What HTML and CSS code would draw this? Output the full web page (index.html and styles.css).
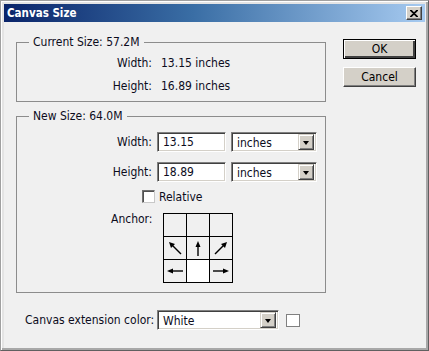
FILE: index.html
```html
<!DOCTYPE html>
<html lang="en">
<head>
    <meta charset="UTF-8">
    <meta name="viewport" content="width=device-width, initial-scale=1.0">
    <title>Canvas Size</title>
    <link rel="stylesheet" href="styles.css">
</head>
<body>
    <div class="window">
        <div class="titlebar">
            <span class="title">Canvas Size</span>
            <button class="close-button">
                <svg width="8" height="7" viewBox="0 0 8 7"><path d="M0 0 L7 7 M1 0 L8 7 M7 0 L0 7 M8 0 L1 7" stroke="#000" stroke-width="1.1"/></svg>
            </button>
        </div>

        <div class="dialog">
            <div class="main-column">
                <fieldset class="group current-size">
                    <legend>Current Size: 57.2M</legend>
                    <div class="info-row">
                        <span class="label">Width:</span>
                        <span class="value">13.15 inches</span>
                    </div>
                    <div class="info-row">
                        <span class="label">Height:</span>
                        <span class="value">16.89 inches</span>
                    </div>
                </fieldset>

                <fieldset class="group new-size">
                    <legend>New Size: 64.0M</legend>
                    <div class="field-row">
                        <span class="label">Width:</span>
                        <div class="text-input">13.15</div>
                        <div class="select unit-select">
                            <span class="select-text">inches</span>
                            <span class="select-arrow"></span>
                        </div>
                    </div>
                    <div class="field-row">
                        <span class="label">Height:</span>
                        <div class="text-input">18.89</div>
                        <div class="select unit-select">
                            <span class="select-text">inches</span>
                            <span class="select-arrow"></span>
                        </div>
                    </div>
                    <div class="check-row">
                        <span class="checkbox"></span>
                        <span>Relative</span>
                    </div>
                    <div class="anchor-row">
                        <span class="anchor-label">Anchor:</span>
                        <div class="anchor-grid">
                            <div class="cell"></div>
                            <div class="cell"></div>
                            <div class="cell"></div>
                            <div class="cell">
                                <svg width="22" height="22" viewBox="0 0 22 22"><path d="M17 17 L8 8" stroke="#000" stroke-width="1.4"/><path d="M5 5 L11 7 L7 11 Z" fill="#000"/></svg>
                            </div>
                            <div class="cell">
                                <svg width="22" height="22" viewBox="0 0 22 22"><path d="M11 19 L11 8" stroke="#000" stroke-width="1.4"/><path d="M11 4 L13.5 10 L8.5 10 Z" fill="#000"/></svg>
                            </div>
                            <div class="cell">
                                <svg width="22" height="22" viewBox="0 0 22 22"><path d="M5 17 L14 8" stroke="#000" stroke-width="1.4"/><path d="M17 5 L15 11 L11 7 Z" fill="#000"/></svg>
                            </div>
                            <div class="cell">
                                <svg width="22" height="22" viewBox="0 0 22 22"><path d="M19 11 L8 11" stroke="#000" stroke-width="1.4"/><path d="M3 11 L9 8.5 L9 13.5 Z" fill="#000"/></svg>
                            </div>
                            <div class="cell center"></div>
                            <div class="cell">
                                <svg width="22" height="22" viewBox="0 0 22 22"><path d="M3 11 L14 11" stroke="#000" stroke-width="1.4"/><path d="M19 11 L13 8.5 L13 13.5 Z" fill="#000"/></svg>
                            </div>
                        </div>
                    </div>
                </fieldset>

                <div class="extension-row">
                    <span class="extension-label">Canvas extension color:</span>
                    <div class="select color-select">
                        <span class="select-text">White</span>
                        <span class="select-arrow"></span>
                    </div>
                    <span class="swatch"></span>
                </div>
            </div>

            <div class="button-column">
                <button class="dialog-button default-button">OK</button>
                <button class="dialog-button">Cancel</button>
            </div>
        </div>
    </div>
</body>
</html>
```

FILE: styles.css
```css
* {
    box-sizing: border-box;
}

body {
    margin: 0;
    width: 429px;
    height: 351px;
    font-family: "DejaVu Sans Condensed", "DejaVu Sans", sans-serif;
    font-size: 12px;
    color: #0c0c1c;
    overflow: hidden;
}

.window {
    width: 429px;
    height: 351px;
    background: #f0f0f0;
    border: 1px solid #a0a0a0;
    border-right-color: #606060;
    border-bottom-color: #606060;
    box-shadow: inset 1px 1px 0 #fff, inset -2px -2px 0 #a8a8a8, inset 3px 3px 0 #e4e4e4;
    padding: 3px;
}

.titlebar {
    height: 18px;
    background: linear-gradient(to right, #0a246a, #3a6ea5 45%, #a6caf0);
    display: flex;
    align-items: center;
    justify-content: space-between;
    padding: 0 3px 0 3px;
}

.title {
    color: #fff;
    font-weight: bold;
    font-size: 11.5px;
}

.close-button {
    width: 16px;
    height: 14px;
    padding: 0;
    margin: 0;
    background: #d4d0c8;
    border: 1px solid;
    border-color: #fff #404040 #404040 #fff;
    box-shadow: inset -1px -1px 0 #808080;
    display: flex;
    align-items: center;
    justify-content: center;
}

.dialog {
    display: flex;
    padding-left: 12px;
}

.main-column {
    width: 310px;
    padding-top: 13px;
}

.group {
    margin: 0;
    padding: 0;
    border: 1px solid #8c8c8c;
}

.group legend {
    margin-left: 12px;
    padding: 0 4px;
    line-height: 14px;
}

.current-size {
    padding-bottom: 8px;
}

.info-row {
    display: flex;
    line-height: 14px;
    margin-top: 7px;
}

.info-row + .info-row {
    margin-top: 9px;
}

.label {
    width: 135px;
    text-align: right;
}

.info-row .value {
    margin-left: 9px;
}

.new-size {
    margin-top: 7px;
    padding-bottom: 9px;
}

.field-row {
    display: flex;
    align-items: center;
    height: 20px;
    margin-top: 9px;
}

.field-row + .field-row {
    margin-top: 10px;
}

.text-input {
    width: 69px;
    height: 20px;
    margin-left: 5px;
    background: #fff;
    border: 1px solid;
    border-color: #808080 #fff #fff #808080;
    box-shadow: inset 1px 1px 0 #404040, inset -1px -1px 0 #d4d0c8;
    padding: 2px 0 0 5px;
    line-height: 14px;
}

.select {
    height: 20px;
    background: #fff;
    border: 1px solid;
    border-color: #808080 #fff #fff #808080;
    box-shadow: inset 1px 1px 0 #404040, inset -1px -1px 0 #d4d0c8;
    display: flex;
    align-items: center;
    justify-content: space-between;
    padding: 2px 2px 2px 5px;
}

.select-text {
    line-height: 14px;
    padding-top: 1px;
}

.select-arrow {
    width: 16px;
    height: 16px;
    background: #d4d0c8;
    border: 1px solid;
    border-color: #d4d0c8 #404040 #404040 #d4d0c8;
    box-shadow: inset 1px 1px 0 #fff, inset -1px -1px 0 #808080;
    position: relative;
}

.select-arrow::after {
    content: "";
    position: absolute;
    left: 4px;
    top: 6px;
    border-left: 3.5px solid transparent;
    border-right: 3.5px solid transparent;
    border-top: 4px solid #000;
}

.unit-select {
    width: 86px;
    margin-left: 5px;
}

.check-row {
    display: flex;
    align-items: center;
    height: 13px;
    margin-top: 8px;
    padding-left: 125px;
}

.checkbox {
    width: 13px;
    height: 13px;
    background: #fff;
    border: 1px solid;
    border-color: #707070 #c8c8c8 #c8c8c8 #707070;
    box-shadow: inset 1px 1px 0 #505050;
    margin-right: 4px;
}

.anchor-row {
    display: flex;
    margin-top: 10px;
    padding-left: 94px;
}

.anchor-label {
    width: 52px;
    line-height: 14px;
    margin-top: -1px;
}

.anchor-grid {
    display: grid;
    grid-template-columns: repeat(3, 22px);
    grid-template-rows: repeat(3, 22px);
    gap: 1px;
    padding: 1px;
    background: #000;
}

.cell {
    background: #f0f0f0;
}

.cell svg {
    display: block;
}

.cell.center {
    background: #fff;
}

.extension-row {
    display: flex;
    align-items: center;
    margin-top: 17px;
    padding-left: 9px;
}

.extension-label {
    width: 132px;
}

.color-select {
    width: 122px;
}

.swatch {
    width: 14px;
    height: 13px;
    margin-left: 7px;
    background: #fff;
    border: 1px solid #808080;
}

.button-column {
    display: flex;
    flex-direction: column;
    gap: 8px;
    margin-left: 17px;
    padding-top: 17px;
}

.dialog-button {
    width: 73px;
    height: 20px;
    padding: 0;
    font-family: inherit;
    font-size: 12px;
    color: #000;
    background: #d4d0c8;
    border: 1px solid;
    border-color: #fff #404040 #404040 #fff;
    box-shadow: inset -1px -1px 0 #808080;
}

.default-button {
    border: 1px solid #000;
    box-shadow: inset 1px 1px 0 #fff, inset -2px -2px 0 #404040;
}
```
